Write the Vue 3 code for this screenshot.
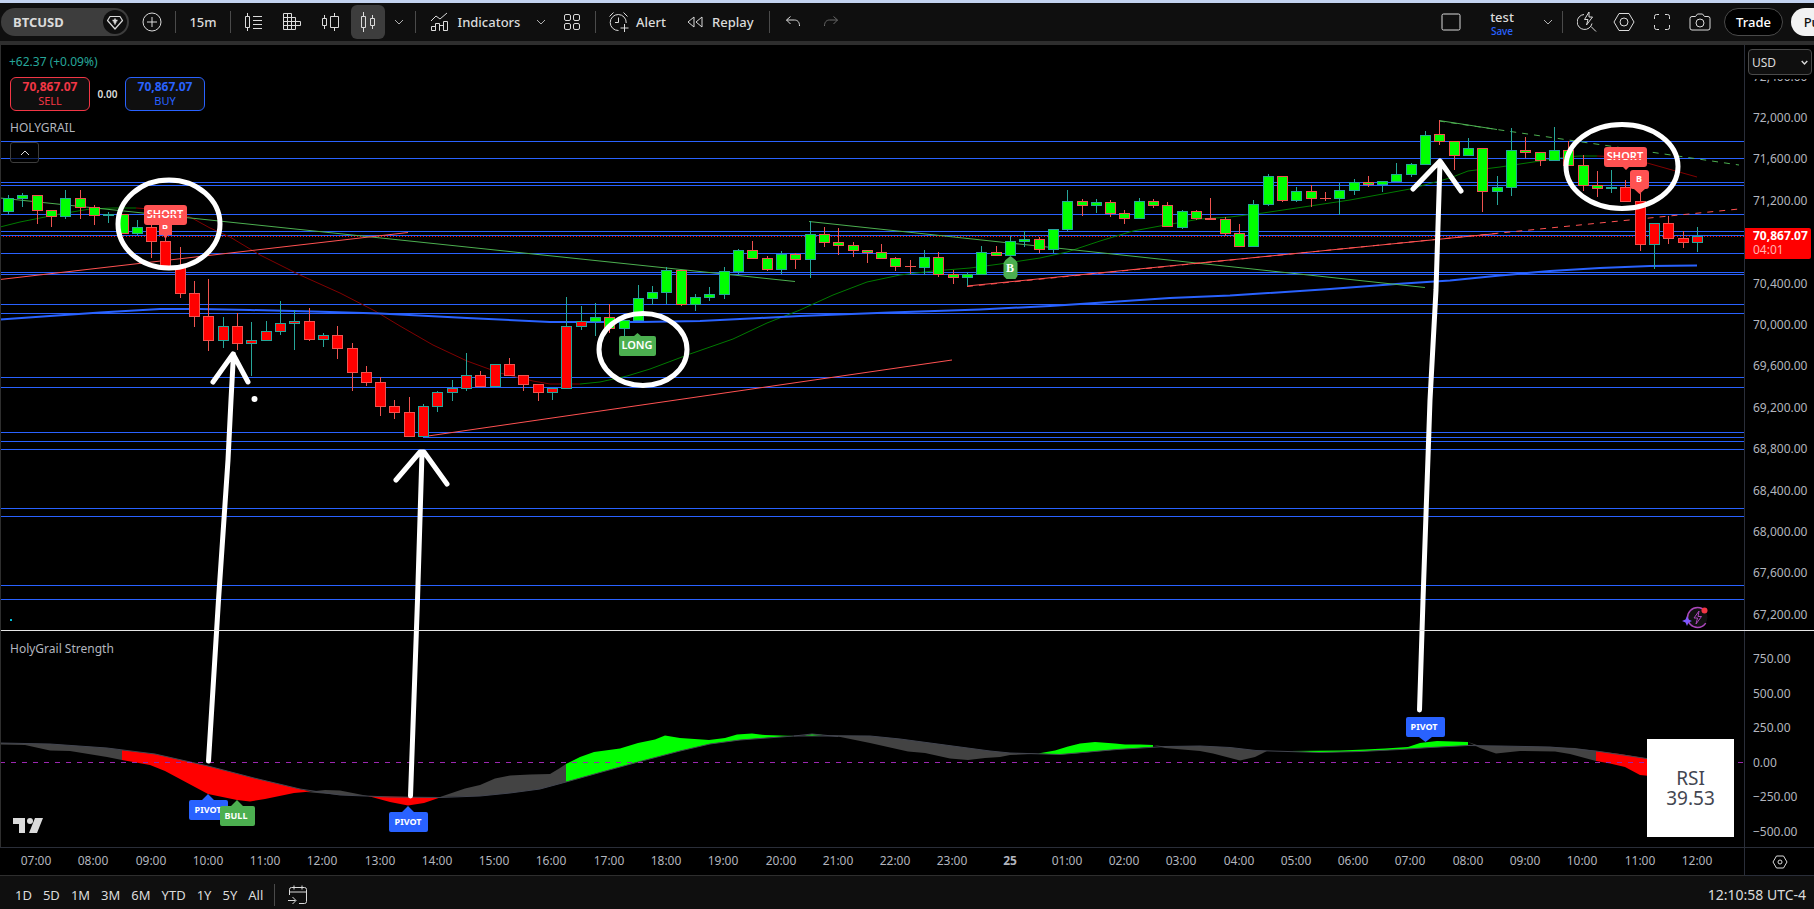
<script setup>
const slot = 14.314
const firstX = 8.5

// fill (g/r) + border (u = teal, d = red), high, body top, body bottom, low
const raw = `gu 195 198 212 214|gu 193 195 199 207|gd 195 195 211 224|gd 210 210 217 227|gu 190 198 217 219|gd 190 198 208 219|gd 205 207 216 225|gu 212 214 216 223|gd 214 214 234 234|gu 220 227 234 235|rd 225 227 242 258|rd 238 241 267 267|rd 247 267 294 298|rd 281 293 317 327|rd 279 316 341 351|ru 317 326 341 348|rd 313 326 344 350|ru 322 340 344 376|ru 321 331 341 341|ru 301 323 332 335|ru 310 321 324 350|rd 308 321 340 341|ru 333 335 340 347|rd 326 335 349 359|rd 343 348 373 391|rd 366 372 383 386|rd 377 382 407 416|rd 400 406 413 419|rd 397 412 437 437|ru 404 406 437 437|ru 391 392 407 412|ru 380 388 393 401|ru 353 375 389 391|rd 371 375 387 387|ru 364 364 387 387|rd 358 364 376 376|rd 375 375 385 391|rd 384 384 393 401|ru 388 388 393 400|ru 297 326 389 389|ru 306 321 327 330|gu 303 317 322 336|gd 304 317 329 333|gu 320 320 329 336|gu 285 298 321 321|gu 286 292 299 305|gu 267 270 293 304|gd 270 270 305 306|gu 294 297 305 311|gu 287 294 298 301|gu 267 271 295 299|gu 249 250 272 274|gd 241 250 259 259|gd 256 258 270 271|gu 251 254 270 274|gd 253 254 260 269|gu 221 234 260 278|gd 227 234 243 247|gd 228 242 246 255|gd 242 245 251 257|gd 250 250 253 263|gd 244 252 259 259|gd 257 258 267 271|gd 260 266 267 274|gu 250 257 268 275|gd 252 257 275 277|gd 270 274 278 284|gu 272 274 278 286|gu 246 252 275 275|gd 246 252 256 256|gu 236 241 256 256|gu 231 239 242 247|gd 237 239 250 253|gu 229 229 250 253|gu 190 201 230 231|gd 199 201 206 216|gu 199 202 206 213|gd 200 202 214 217|gd 210 213 219 224|gu 198 201 219 219|gd 199 201 206 208|gd 202 205 227 227|gu 210 211 228 229|gd 210 211 219 220|gd 198 218 220 220|gd 217 219 234 236|gd 224 233 247 247|gu 200 204 247 247|gu 174 176 205 206|gd 176 176 201 202|gu 187 191 201 202|gd 185 191 199 207|gd 192 198 199 201|gu 183 190 199 215|gu 179 182 191 195|gd 176 182 185 187|gu 181 181 185 192|gu 163 174 182 182|gu 163 164 175 177|gu 131 135 165 165|gd 120 134 142 145|gd 141 141 156 170|gu 138 148 156 156|gd 148 148 192 212|gu 176 187 192 205|gu 128 150 188 196|gd 137 150 153 158|gd 152 152 161 166|gu 127 150 161 161|gd 141 150 166 166|gd 155 165 186 191|gd 171 185 189 197|gu 170 187 189 193|rd 180 187 202 202|rd 193 201 245 251|ru 223 223 245 269|rd 216 223 239 244|rd 231 238 243 248|ru 227 236 243 252`

const candles = raw.split('|').map((row, i) => {
  const [kind, high, top, bottom, low] = row.split(' ')
  return {
    x: Math.floor(firstX + i * slot),
    fill: kind[0] === 'g' ? '#00ff00' : '#ff0000',
    border: kind[1] === 'u' ? '#26a69a' : '#ef5350',
    high: +high,
    top: +top,
    body: bottom - top,
    wick: low - high,
  }
})

const levels = [141, 158, 182, 185, 214, 231, 235, 253, 272, 274, 304, 313, 377, 387, 432, 441, 449, 508, 516, 585, 599]

const priceTicks = Array.from({ length: 14 }, (_, i) => {
  const price = 72400 - i * 400
  return { label: price.toLocaleString('en-US') + '.00', y: Math.round(76.5 + i * 41.4) }
}).filter((t) => t.label !== '70,800.00')

const strengthTicks = ['750.00', '500.00', '250.00', '0.00', '−250.00', '−500.00'].map((label, i) => ({
  label,
  y: Math.round(659 + i * 34.5),
}))

const hours = Array.from({ length: 30 }, (_, i) => {
  const h = (7 + i) % 24
  return { label: h === 0 ? '25' : String(h).padStart(2, '0') + ':00', x: Math.round(36 + i * 57.27), day: h === 0 }
})

const ranges = ['1D', '5D', '1M', '3M', '6M', 'YTD', '1Y', '5Y', 'All']

const bands = [
  ['#434343', '0,743 50,744 107,748 122,750 122,760 107,757 70,751 50,750.5 25,745 0,744.5'],
  ['#ff0000', '122,750 155,754 208,766 254,778 300,789 311,791.5 294,793 265,799 250,801.5 237,800 208,794 165,771 150,765 122,760'],
  ['#434343', '306,792 325,790 340,790.5 368,796 340,795'],
  ['#ff0000', '368,796 390,796.5 408,797 440,797.5 424,803 408,805.5 390,802'],
  ['#434343', '440,797 465,788.5 480,785 495,778.5 510,775.5 530,774.5 550,774 560,768 566,764 566,782 540,789 510,793 480,796'],
  ['#00ff00', '566,764 580,757 594,752 620,748.5 638,743 655,739.5 665,735.5 680,738 709,740 725,738 737,734.5 752,733.5 765,735 780,735.5 794,736 770,737.5 740,740 710,744 680,751 640,761.5 600,772.5 566,782'],
  ['#00ff00', '804,735.5 812,734 823,735 812,736'],
  ['#434343', '823,735 870,736 900,739 945,745 990,751 1010,753 1042,753.5 1010,755 1000,757 985,758 968,760 950,758.5 925,753 908,751.5 870,743 838,736.5'],
  ['#00ff00', '1038,753.5 1055,750.5 1068,746.5 1080,743.5 1095,742 1115,743.5 1125,744.5 1140,744.5 1153,745 1153,747 1117,749.5 1080,753 1060,754.5'],
  ['#434343', '1153,745 1165,746.5 1200,746 1230,747.5 1256,750.5 1267,751 1255,757 1240,760.5 1213,753.5 1200,751 1165,748'],
  ['#00ff00', '1290,751 1340,750.5 1365,749.5 1385,748.5 1408,747 1420,743 1437,741 1468,742 1468,745.5 1430,747.5 1400,749.5 1360,751.5 1320,752.5'],
  ['#434343', '1468,742 1480,746 1500,746 1550,747 1575,748 1596,751 1596,761 1570,754 1555,751.5 1520,751 1496,753.5 1480,748'],
  ['#ff0000', '1596,751 1620,754 1650,759 1650,776 1640,775 1625,767 1610,763.5 1596,761'],
]
</script>

<template>
  <div class="app">
    <header class="toolbar">
      <button class="symbol">
        <span>BTCUSD</span>
        <svg class="gem" width="24" height="24" viewBox="0 0 24 24"><circle cx="12" cy="12" r="12" fill="#0f0f0f" /><path d="M7 6.5h10l2.500 4L12 19l-7.500-8.500z" fill="none" stroke="#dbdbdb" stroke-width="1.2" stroke-linejoin="round" /><path d="M12 8.500v6M9.500 10.500h5M10.500 12h3" stroke="#dbdbdb" stroke-width="1.5" /></svg>
      </button>
      <button class="add" aria-label="Compare"><svg width="20" height="20" viewBox="0 0 20 20"><circle cx="10" cy="10" r="9" /><path d="M10 5v10M5 10h10" /></svg></button>
      <i class="sep"></i>
      <button class="interval">15m</button>
      <i class="sep"></i>
      <div class="styles">
        <button class="ico" aria-label="Volume candles"><svg width="20" height="20" viewBox="0 0 20 20"><path d="M3.500 1v3M3.500 16v3M1.500 4.500h4v11h-4zM9 4.500h9M9 8.500h9M9 12.500h9M9 16.500h9" /></svg></button>
        <button class="ico" aria-label="Footprint"><svg width="20" height="20" viewBox="0 0 20 20"><path d="M1.500 1.500h8v16h-8zM1.500 5.500h12v8h-12M1.500 9.500h17v4h-17M5.500 1.500v16M9.500 5v12.500M13.500 9.500v4M9.500 17.500h4v-4" /></svg></button>
        <button class="ico" aria-label="Volume footprint"><svg width="20" height="20" viewBox="0 0 20 20"><path d="M4.500 3v3M4.500 14v3M2.500 6.500h4v7h-4zM14.500 1v3M14.500 16v3M10.500 4.500h8v11h-8z" /></svg></button>
        <button class="ico active" aria-label="Candles"><svg width="20" height="20" viewBox="0 0 20 20"><path d="M5.500 0v4M5.500 16v4M3.500 4.500h4v11h-4zM14.500 3v3M14.500 13v4M12.500 6.500h4v7h-4z" /></svg></button>
        <button class="chev" aria-label="Chart styles"><svg width="10" height="10" viewBox="0 0 10 10"><path d="M1 3l4 4 4-4" /></svg></button>
      </div>
      <i class="sep"></i>
      <button class="label indicators"><svg width="20" height="20" viewBox="0 0 20 20"><path d="M1 9l5-5 4 3 7-6M1.500 18.500v-4h4v4zM5.500 18.500v-7h4v7M9.500 18.500v-5h4v5M13.500 18.500v-9h4v9z" /></svg>Indicators</button>
      <button class="chev" aria-label="Favourite indicators"><svg width="10" height="10" viewBox="0 0 10 10"><path d="M1 3l4 4 4-4" /></svg></button>
      <button class="ico tiles" aria-label="Templates"><svg width="18" height="18" viewBox="0 0 18 18"><rect x="1.500" y="1.500" width="6" height="6" rx="1.500" /><rect x="10.500" y="1.500" width="6" height="6" rx="1.500" /><rect x="1.500" y="10.500" width="6" height="6" rx="1.500" /><rect x="10.500" y="10.500" width="6" height="6" rx="1.500" /></svg></button>
      <i class="sep"></i>
      <button class="label alert"><svg width="22" height="22" viewBox="0 0 22 22"><path d="M18.200 12a8 8 0 1 0-7.700 7.500M10.500 6.500v5H7M1.500 5.500l4-4M15.500 1.500l4 4M16.500 13v8M12.500 17h8" /></svg>Alert</button>
      <button class="label replay"><svg width="18" height="14" viewBox="0 0 18 14"><path d="M8 2v10L2 7zM16 2v10l-6-5z" stroke-linejoin="round" /></svg>Replay</button>
      <i class="sep"></i>
      <button class="ico undo" aria-label="Undo"><svg width="16" height="14" viewBox="0 0 16 14"><path d="M5.500 1.500L1.500 5l4 4M1.500 5h8c3 0 5 2 5 6" /></svg></button>
      <button class="ico redo" aria-label="Redo"><svg width="16" height="14" viewBox="0 0 16 14"><path d="M10.500 1.500l4 3.500-4 4M14.500 5h-8c-3 0-5 2-5 6" /></svg></button>

      <div class="right">
        <button class="ico" aria-label="Layout"><svg width="20" height="18" viewBox="0 0 20 18"><rect x="1" y="1" width="18" height="16" rx="1.500" /></svg></button>
        <button class="layout"><span>test</span><small>Save</small></button>
        <button class="chev" aria-label="Layouts"><svg width="10" height="10" viewBox="0 0 10 10"><path d="M1 3l4 4 4-4" /></svg></button>
        <i class="sep"></i>
        <button class="ico search" aria-label="Quick search"><svg width="20" height="22" viewBox="0 0 20 22"><path d="M7 3.500a7.500 7.500 0 1 0 8 9M14 15.500l5 5M12 1L7.500 8.500h3.500L9.500 14l6-8H12z" stroke-linejoin="round" /></svg></button>
        <button class="ico" aria-label="Settings"><svg width="22" height="20" viewBox="0 0 22 20"><path d="M6 1.500h10l5 8.500-5 8.500H6L1 10z" stroke-linejoin="round" /><circle cx="11" cy="10" r="4" /></svg></button>
        <button class="ico" aria-label="Fullscreen"><svg width="18" height="18" viewBox="0 0 18 18"><path d="M1.500 6V3.500a2 2 0 0 1 2-2H6M12 1.500h2.500a2 2 0 0 1 2 2V6M16.500 12v2.500a2 2 0 0 1-2 2H12M6 16.500H3.500a2 2 0 0 1-2-2V12" /></svg></button>
        <button class="ico camera" aria-label="Snapshot"><svg width="22" height="18" viewBox="0 0 22 18"><path d="M3 3.500h3.500l2-2.500h5l2 2.500H19a2 2 0 0 1 2 2V15a2 2 0 0 1-2 2H3a2 2 0 0 1-2-2V5.500a2 2 0 0 1 2-2z" /><circle cx="11" cy="10" r="4" /></svg></button>
        <button class="trade">Trade</button>
        <button class="publish">Publish</button>
      </div>
    </header>

    <main class="main">
      <section class="plot">
        <svg class="canvas" viewBox="0 45 1744 802" preserveAspectRatio="none">
          <rect v-for="y in levels" :key="y" x="0" :y="y" width="1744" height="1" fill="#2962ff" />
          <rect x="423" y="437" width="1321" height="1" fill="#2962ff" />
          <path d="M0 236.500H1744" stroke="#ff0000" stroke-dasharray="1 2" />

          <g fill="none">
            <path stroke="#007a00" d="M0 227L20 222 60 214 90 209 113 208 136 208M580 384L600 382 627 376 650 369 690 354 733 339 767 323 800 310 833 295 867 282 900 275 933 271 970 268 1000 264 1040 258 1067 252 1100 241 1133 231 1160 226 1200 219 1230 217 1263 213 1310 206 1350 200 1410 189 1450 178 1468 171 1500 167 1540 161 1565 157 1580 156 1597 156" />
            <path stroke="#800000" d="M136 208L150 209 175 213 190 217 210 228 230 237 260 255 300 275 340 293 375 311 400 326 433 345 467 361 500 373 533 381 550 384 580 384M1597 156L1620 157 1640 161 1665 168 1697 177" />
            <path stroke="#2962ff" stroke-width="2" d="M0 319.500L50 316 100 312.500 160 309 200 309 250 310 313 311.500 380 313.500 467 318 550 322 640 322 700 321 760 318 800 316 890 312.500 980 309.500 1050 306 1110 302 1170 298 1230 295.500 1330 289 1396 284 1450 280.500 1500 275.500 1550 271 1600 268 1650 266 1697 265.500" />
            <path stroke="#4caf50" d="M0 198L795 281.500M809 221.500L1425 287.500M1439 120.500L1497 129.500" />
            <path stroke="#4caf50" stroke-dasharray="6 6" d="M1439 121L1739 165" />
            <path stroke="#ff5252" d="M0 279.500L408 232.500M428 436L952 360M967 286L1497 233.500" />
            <path stroke="#ff5252" stroke-dasharray="6 6" d="M967 286.500L1739 209" />
          </g>

          <g v-for="(c, i) in candles" :key="i">
            <rect :x="c.x" :y="c.high" width="1" :height="c.wick" :fill="c.border" />
            <rect :x="c.x - 5" :y="c.top" width="11" :height="c.body" :fill="c.border" />
            <rect v-if="c.body > 2" :x="c.x - 4" :y="c.top + 1" width="9" :height="c.body - 2" :fill="c.fill" />
          </g>

          <polygon v-for="(b, i) in bands" :key="'b' + i" :points="b[1]" :fill="b[0]" />
          <g fill="none" stroke="#434651">
            <path d="M0 743L50 744 107 748 155 754 208 766 254 778 300 789 340 795 390 797 440 797.500 480 796 510 793 540 789 566 782 600 772.500 640 761.500 680 751 710 744 740 740 794 736 870 736 900 739 945 745 990 751 1010 753 1060 754.500 1117 749.500 1165 746.500 1200 746 1230 747.500 1256 750.500 1320 752.500 1360 751.500 1400 749.500 1430 747.500 1468 745.500 1500 746 1550 747 1596 751 1650 759" />
            <path d="M794 736L812 734 838 736.500" />
          </g>
          <path d="M0 762.500H1744" stroke="#9c27b0" stroke-dasharray="5 6" />

          <g class="tags">
            <path d="M159 216h13v19h-4l-2.500 4-2.500-4h-4z" fill="#ff5252" /><text x="165" y="229" class="small">B</text>
            <path d="M147 205h37a3 3 0 0 1 3 3v14a3 3 0 0 1-3 3h-37a3 3 0 0 1-3-3v-14a3 3 0 0 1 3-3z" fill="#ff5252" /><text x="165" y="218">SHORT</text>
            <path d="M144 214.500h43" stroke="#ff5252" />
            <path d="M1607 147h37a3 3 0 0 1 3 3v14a3 3 0 0 1-3 3h-15l-3 3-3-3h-16a3 3 0 0 1-3-3v-14a3 3 0 0 1 3-3z" fill="#ff5252" /><text x="1625" y="160">SHORT</text>
            <path d="M1604 158.500h43" stroke="#ff5252" />
            <path d="M1633 170h13a3 3 0 0 1 3 3v13a3 3 0 0 1-3 3h-1l-5.500 5-5.500-5h-1a3 3 0 0 1-3-3v-13a3 3 0 0 1 3-3z" fill="#ff5252" /><text x="1639" y="182" class="small">B</text>
            <path d="M621 336h13l3.500-3 3.500 3h13a2 2 0 0 1 2 2v16a2 2 0 0 1-2 2h-33a2 2 0 0 1-2-2v-16a2 2 0 0 1 2-2z" fill="#4caf50" /><text x="637" y="349">LONG</text>
            <path d="M1010.500 256l5 4 2 3v13l-2 3h-9l-3-3v-13l2-3z" fill="#4caf50" /><text x="1010" y="272" class="serif">B</text>
            <path d="M191 800h11l6-6 6 6h12a2 2 0 0 1 2 2v16a2 2 0 0 1-2 2h-35a2 2 0 0 1-2-2v-16a2 2 0 0 1 2-2z" fill="#2962ff" /><text x="208" y="813" class="small">PIVOT</text>
            <path d="M222 806h9l6-6 6 6h10a2 2 0 0 1 2 2v16a2 2 0 0 1-2 2h-31a2 2 0 0 1-2-2v-16a2 2 0 0 1 2-2z" fill="#4caf50" /><text x="236" y="819" class="small">BULL</text>
            <path d="M391 812h11l6-6 6 6h12a2 2 0 0 1 2 2v16a2 2 0 0 1-2 2h-35a2 2 0 0 1-2-2v-16a2 2 0 0 1 2-2z" fill="#2962ff" /><text x="408" y="825" class="small">PIVOT</text>
            <path d="M1408 717h35a2 2 0 0 1 2 2v16a2 2 0 0 1-2 2h-11l-6.500 5-6.500-5h-11a2 2 0 0 1-2-2v-16a2 2 0 0 1 2-2z" fill="#2962ff" /><text x="1424" y="730" class="small">PIVOT</text>
          </g>

          <g fill="none" stroke="#fff" stroke-width="5" stroke-linecap="round" stroke-linejoin="round">
            <ellipse cx="169" cy="224" rx="51" ry="44" />
            <ellipse cx="643" cy="349.500" rx="44" ry="36" />
            <ellipse cx="1622" cy="166.500" rx="56" ry="42" />
            <path d="M208.500 761L218.500 600 228 460 231 400 233.500 354M213 382L233 354 248 382" />
            <path d="M410.500 796L417.500 600 422 453M396 480L420 452 424 452 447 484" />
            <path d="M1419.500 710L1423 600 1430 400 1436 290 1440 162M1413 189L1440 161 1461 191" />
          </g>
          <circle cx="254.500" cy="399" r="3" fill="#fff" />
          <rect x="10" y="619" width="2" height="2" fill="#00bcd4" />

          <g class="spark">
            <circle cx="1697.500" cy="617.500" r="10" fill="#111" stroke="#ab47bc" stroke-width="1.500" stroke-dasharray="50 13" stroke-dashoffset="-6" />
            <path d="M1699 611l-5 7h3.500l-1.500 6 5.500-7.500h-3.500z" fill="none" stroke="#ab47bc" />
            <path d="M1687 616l1.500 3.500 3.500 1.500-3.500 1.500-1.500 3.500-1.500-3.500-3.500-1.500 3.500-1.500z" fill="#7e57ff" />
            <circle cx="1704.500" cy="610.500" r="3" fill="#f23645" />
          </g>
          <g fill="#dbdbdb"><path d="M13 818h12v15h-6v-9h-6zM35 818h8l-6 15h-8z" /><circle cx="30" cy="821" r="3" /></g>
        </svg>

        <div class="rsi"><span>RSI</span><span>39.53</span></div>

        <div class="legend">
          <div class="change">+62.37 (+0.09%)</div>
          <div class="quotes">
            <button class="quote sell"><b>70,867.07</b><span>SELL</span></button>
            <span class="spread">0.00</span>
            <button class="quote buy"><b>70,867.07</b><span>BUY</span></button>
          </div>
          <div class="study">HOLYGRAIL</div>
          <button class="collapse" aria-label="Collapse"><svg width="10" height="10" viewBox="0 0 10 10"><path d="M1 7l4-4 4 4" /></svg></button>
        </div>
        <div class="study strength">HolyGrail Strength</div>
      </section>

      <aside class="scale">
        <svg class="canvas" viewBox="1745 45 69 802" preserveAspectRatio="none">
          <text v-for="t in priceTicks" :key="t.label" x="1753" :y="t.y + 4">{{ t.label }}</text>
          <text v-for="t in strengthTicks" :key="t.label" x="1753" :y="t.y + 4">{{ t.label }}</text>
          <rect x="1745" y="45" width="69" height="34" fill="#000" />
          <path d="M1745 228h64a2 2 0 0 1 2 2v27a2 2 0 0 1-2 2h-64z" fill="#ff0000" />
          <text x="1753" y="240" class="now">70,867.07</text>
          <text x="1753" y="254" class="count">04:01</text>
        </svg>
        <div class="currency">
          <select aria-label="Currency"><option>USD</option></select>
          <svg width="7" height="7" viewBox="0 0 10 10"><path d="M1 3l4 4 4-4" /></svg>
        </div>
      </aside>

      <div class="split"></div>

      <div class="times">
        <svg class="canvas" viewBox="0 848 1744 27" preserveAspectRatio="none">
          <text v-for="h in hours" :key="h.x" :x="h.x" y="865" :class="{ day: h.day }">{{ h.label }}</text>
        </svg>
      </div>
      <button class="gear" aria-label="Scale settings"><svg width="16" height="14" viewBox="0 0 16 14"><path d="M4.500 1h7L15 7l-3.500 6h-7L1 7z" stroke-linejoin="round" /><circle cx="8" cy="7" r="2" /></svg></button>
    </main>

    <footer class="footer">
      <button v-for="r in ranges" :key="r">{{ r }}</button>
      <i class="sep"></i>
      <button class="goto" aria-label="Go to date"><svg width="20" height="20" viewBox="0 0 20 20"><path d="M1.500 10V4.500a2 2 0 0 1 2-2h13a2 2 0 0 1 2 2v12a2 2 0 0 1-2 2H11M1.500 7h17M6 .500v4M14 .500v4M0 15.500h7.500M4.500 12l3.500 3.500L4.500 19" /></svg></button>
      <button class="clock">12:10:58 UTC-4</button>
    </footer>
  </div>
</template>

<style>
body {
  margin: 0;
  background: #000;
}
</style>

<style scoped>
.app {
  display: grid;
  grid-template-rows: auto 1fr auto;
  height: 100vh;
  overflow: hidden;
  background: #000;
  color: #dbdbdb;
  font-family: "Trebuchet MS", "Noto Sans", sans-serif;
  font-size: 13px;
}
button {
  display: flex;
  align-items: center;
  justify-content: center;
  flex: none;
  padding: 0;
  border: 0;
  background: none;
  color: inherit;
  font: inherit;
}
button svg,
.currency svg {
  fill: none;
  stroke: #dbdbdb;
  flex: none;
}
.toolbar {
  display: flex;
  align-items: center;
  height: 38px;
  overflow: hidden;
  background: #0f0f0f;
  border-top: 3px solid #c3d3f0;
  border-bottom: 4px solid #2e2e2e;
  font-weight: 500;
}
.sep {
  flex: none;
  width: 1px;
  height: 22px;
  background: #4a4a4a;
}
.symbol {
  justify-content: space-between;
  width: 128px;
  height: 28px;
  margin-left: 1px;
  padding: 0 2px 0 12px;
  border-radius: 14px;
  background: #3d3d3d;
  font-weight: 700;
}
.symbol .gem {
  stroke: none;
}
.add {
  width: 46px;
}
.interval {
  width: 54px;
}
.styles {
  display: flex;
  gap: 4px;
  margin: 0 6px;
}
.ico {
  width: 34px;
  height: 34px;
  border-radius: 6px;
}
.active {
  background: #3d3d3d;
}
.chev {
  width: 20px;
}
.chev svg {
  stroke: #b0b0b0;
}
.label svg {
  margin-right: 8px;
}
.indicators {
  width: 102px;
  margin: 0 5px 0 8px;
}
.tiles {
  margin: 0 6px 0 4px;
}
.alert {
  margin: 0 20px 0 12px;
}
.alert svg {
  margin-right: 6px;
}
.replay {
  margin-right: 15px;
}
.undo {
  margin: 0 4px 0 6px;
}
.redo svg {
  stroke: #6a6a6a;
}
.right {
  display: flex;
  align-items: center;
  gap: 4px;
  flex: none;
  margin-left: auto;
  margin-right: -48px;
}
.layout {
  flex-direction: column;
  width: 60px;
  padding-top: 3px;
  line-height: 16px;
}
.layout small {
  color: #2962ff;
  font-size: 10px;
  line-height: 13px;
}
.right .sep {
  margin: 0 3px 0 0;
}
.right .search {
  margin-right: -1px;
}
.right .chev {
  margin-left: 2px;
}
.trade {
  width: 59px;
  height: 28px;
  margin-left: 3px;
  border: 1px solid #4a4a4a;
  border-radius: 14px;
  background: #000;
  color: #fff;
}
.publish {
  width: 71px;
  height: 28px;
  margin-left: 4px;
  border-radius: 14px;
  background: #f2f2f2;
  color: #0f0f0f;
}
.main {
  position: relative;
  display: grid;
  grid-template-columns: 1fr 70px;
  grid-template-rows: 1fr 29px;
  min-height: 0;
}
.plot,
.scale,
.times {
  position: relative;
  min-width: 0;
  min-height: 0;
}
.plot::before {
  content: "";
  position: absolute;
  z-index: 1;
  inset: 0 auto 0 0;
  width: 1px;
  background: #2e2e2e;
}
.canvas {
  position: absolute;
  inset: 0;
  width: 100%;
  height: 100%;
}
.tags text {
  fill: #fff;
  font-size: 11px;
  font-weight: 600;
  text-anchor: middle;
}
.tags .small {
  font-size: 9px;
  font-weight: 700;
}
.tags .serif {
  font-family: "Liberation Serif", serif;
  font-weight: 700;
  font-size: 12px;
}
.rsi {
  position: absolute;
  right: 10px;
  bottom: 10px;
  display: flex;
  flex-direction: column;
  align-items: center;
  justify-content: center;
  width: 87px;
  height: 98px;
  background: #fff;
  color: #434651;
  font-size: 19px;
  line-height: 20px;
}
.legend {
  position: absolute;
  top: 8px;
  left: 9px;
}
.change {
  color: #26a69a;
  font-size: 12px;
  line-height: 18px;
}
.quotes {
  display: flex;
  align-items: center;
  margin: 6px 0 9px 1px;
}
.quote {
  flex-direction: column;
  width: 80px;
  height: 34px;
  padding-bottom: 2px;
  border: 1px solid;
  border-radius: 6px;
  background: #0f0f0f;
  font-size: 12px;
  line-height: 15px;
}
.quote span {
  font-size: 11px;
  line-height: 14px;
}
.sell {
  color: #f23645;
}
.buy {
  color: #2962ff;
}
.spread {
  width: 35px;
  font-size: 10px;
  font-weight: 600;
  text-align: center;
}
.study {
  margin-left: 1px;
  color: #b2b5be;
  font-size: 12px;
  line-height: 16px;
}
.strength {
  position: absolute;
  top: 74.3%;
  left: 9px;
}
.collapse {
  width: 29px;
  height: 21px;
  margin: 6px 0 0 1px;
  border: 1px solid #3d3d3d;
  border-radius: 3px;
  background: rgba(0, 0, 0, 0.6);
}
.scale {
  border-left: 1px solid #2a2e39;
}
.scale text {
  fill: #b2b5be;
  font-size: 12px;
}
.scale .now {
  fill: #fff;
  font-weight: 700;
}
.scale .count {
  fill: #ffb3b3;
}
.currency {
  position: absolute;
  top: 4px;
  left: 3px;
  right: 2px;
  height: 26px;
}
.currency select {
  width: 100%;
  height: 100%;
  padding: 0 3px;
  border: 1px solid #4a4a4a;
  border-radius: 4px;
  background: #0f0f0f;
  color: #dbdbdb;
  font: inherit;
  font-size: 12px;
  appearance: none;
}
.currency svg {
  position: absolute;
  top: 10px;
  right: 4px;
  stroke-width: 2;
}
.split {
  position: absolute;
  top: calc((100% - 29px) * 0.7295);
  left: 0;
  right: 0;
  height: 1px;
  background: #e6e6e6;
}
.times {
  border-top: 1px solid #2a2e39;
  border-bottom: 1px solid #2e2e2e;
}
.times text {
  fill: #b2b5be;
  font-size: 12px;
  text-anchor: middle;
}
.times .day {
  font-weight: 700;
}
.gear {
  border: solid #2a2e39;
  border-width: 1px 0 1px 1px;
}
.footer {
  display: flex;
  align-items: center;
  gap: 11px;
  height: 33px;
  padding: 4px 8px 0 15px;
  box-sizing: border-box;
  background: #0f0f0f;
  font-size: 13px;
}
.goto {
  margin-left: 2px;
}
.clock {
  margin-left: auto;
  font-size: 14px;
}
</style>
